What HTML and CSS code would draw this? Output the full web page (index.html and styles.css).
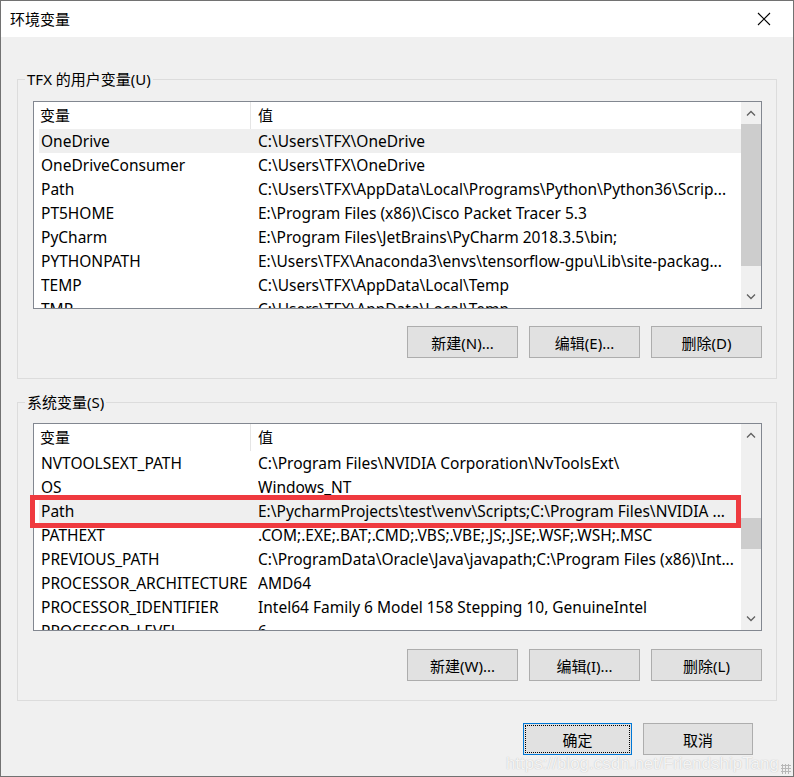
FILE: index.html
```html
<!DOCTYPE html>
<html>
<head>
  <meta charset="utf-8">
  <title>环境变量</title>
  <link rel="stylesheet" href="styles.css">
</head>
<body>
  <div class="dialog">
    <div class="titlebar">
      <span class="title">环境变量</span>
      <span class="close">
        <svg width="14" height="14" viewBox="0 0 14 14"><path d="M1 1 L13 13 M13 1 L1 13" stroke="#000" stroke-width="1.1" fill="none"/></svg>
      </span>
    </div>

    <div class="content">
      <fieldset class="group">
        <legend>TFX 的用户变量(U)</legend>
        <div class="list">
          <div class="list-body">
            <div class="list-head">
              <div class="head-col first">变量</div>
              <div class="head-col">值</div>
            </div>
            <div class="row hover"><span>OneDrive</span><span>C:\Users\TFX\OneDrive</span></div>
            <div class="row"><span>OneDriveConsumer</span><span>C:\Users\TFX\OneDrive</span></div>
            <div class="row"><span>Path</span><span>C:\Users\TFX\AppData\Local\Programs\Python\Python36\Scrip...</span></div>
            <div class="row"><span>PT5HOME</span><span>E:\Program Files (x86)\Cisco Packet Tracer 5.3</span></div>
            <div class="row"><span>PyCharm</span><span>E:\Program Files\JetBrains\PyCharm 2018.3.5\bin;</span></div>
            <div class="row"><span>PYTHONPATH</span><span>E:\Users\TFX\Anaconda3\envs\tensorflow-gpu\Lib\site-packag...</span></div>
            <div class="row"><span>TEMP</span><span>C:\Users\TFX\AppData\Local\Temp</span></div>
            <div class="row"><span>TMP</span><span>C:\Users\TFX\AppData\Local\Temp</span></div>
          </div>
          <div class="scrollbar">
            <div class="arrow up"><svg width="10" height="6" viewBox="0 0 10 6"><path d="M1 5.5 L5 1.5 L9 5.5" stroke="#606060" stroke-width="1.3" fill="none"/></svg></div>
            <div class="track"><div class="thumb thumb-user"></div></div>
            <div class="arrow down"><svg width="10" height="6" viewBox="0 0 10 6"><path d="M1 0.5 L5 4.5 L9 0.5" stroke="#606060" stroke-width="1.3" fill="none"/></svg></div>
          </div>
        </div>
        <div class="buttons">
          <button>新建(N)...</button>
          <button>编辑(E)...</button>
          <button>删除(D)</button>
        </div>
      </fieldset>

      <fieldset class="group second">
        <legend>系统变量(S)</legend>
        <div class="list">
          <div class="list-body">
            <div class="list-head">
              <div class="head-col first">变量</div>
              <div class="head-col">值</div>
            </div>
            <div class="row"><span>NVTOOLSEXT_PATH</span><span>C:\Program Files\NVIDIA Corporation\NvToolsExt\</span></div>
            <div class="row"><span>OS</span><span>Windows_NT</span></div>
            <div class="row hover"><span>Path</span><span>E:\PycharmProjects\test\venv\Scripts;C:\Program Files\NVIDIA ...</span></div>
            <div class="row"><span>PATHEXT</span><span>.COM;.EXE;.BAT;.CMD;.VBS;.VBE;.JS;.JSE;.WSF;.WSH;.MSC</span></div>
            <div class="row"><span>PREVIOUS_PATH</span><span>C:\ProgramData\Oracle\Java\javapath;C:\Program Files (x86)\Int...</span></div>
            <div class="row"><span>PROCESSOR_ARCHITECTURE</span><span>AMD64</span></div>
            <div class="row"><span>PROCESSOR_IDENTIFIER</span><span>Intel64 Family 6 Model 158 Stepping 10, GenuineIntel</span></div>
            <div class="row"><span>PROCESSOR_LEVEL</span><span>6</span></div>
          </div>
          <div class="scrollbar">
            <div class="arrow up"><svg width="10" height="6" viewBox="0 0 10 6"><path d="M1 5.5 L5 1.5 L9 5.5" stroke="#606060" stroke-width="1.3" fill="none"/></svg></div>
            <div class="track"><div class="thumb thumb-system"></div></div>
            <div class="arrow down"><svg width="10" height="6" viewBox="0 0 10 6"><path d="M1 0.5 L5 4.5 L9 0.5" stroke="#606060" stroke-width="1.3" fill="none"/></svg></div>
          </div>
          <div class="marker"></div>
        </div>
        <div class="buttons">
          <button>新建(W)...</button>
          <button>编辑(I)...</button>
          <button>删除(L)</button>
        </div>
      </fieldset>

      <div class="footer">
        <button class="default"><span class="focus">确定</span></button>
        <button>取消</button>
      </div>
    </div>

    <div class="watermark">https://blog.csdn.net/FriendshipTang</div>
    <div class="grip"></div>
  </div>
</body>
</html>
```

FILE: styles.css
```css
body {
  margin: 0;
  font-family: "Noto Sans", "Noto Sans CJK SC", sans-serif;
  font-size: 15px;
  color: #000;
}

.dialog {
  position: relative;
  width: 794px;
  height: 777px;
  box-sizing: border-box;
  border: 1px solid #727272;
  background-color: #f0f0f0;
  overflow: hidden;
}

.titlebar {
  height: 36px;
  background-color: #fff;
  display: flex;
  align-items: center;
  justify-content: space-between;
  padding-left: 9px;
}

.title {
  font-size: 15px;
  margin-top: -2px;
}

.close {
  width: 46px;
  display: flex;
  justify-content: center;
  margin-right: 6px;
  margin-top: -1px;
}

.content {
  padding: 0 39px 0 16px;
}

.group {
  margin: 32px -23px 0 0;
  padding: 12px 14px 20px 15px;
  border: 1px solid #dcdcdc;
  min-width: 0;
}

.group.second {
  margin-top: 13px;
  padding-top: 11px;
  padding-bottom: 19px;
}

.group legend {
  padding: 0 2px;
  margin-left: -8px;
  line-height: 20px;
  font-size: 15px;
}

.list {
  position: relative;
  display: flex;
  height: 206px;
  border: 1px solid #828790;
  background-color: #fff;
}

.list-body {
  flex: 1;
  min-width: 0;
  overflow: hidden;
}

.list-head {
  display: grid;
  grid-template-columns: 217px 1fr;
  height: 27px;
  align-items: center;
}

.head-col {
  padding-left: 7px;
  height: 27px;
  line-height: 27px;
}

.head-col.first {
  border-right: 1px solid #e5e5e5;
  padding-left: 6px;
}

.row {
  display: grid;
  grid-template-columns: 217px 1fr;
  height: 24px;
  line-height: 24px;
  margin-left: 5px;
  padding-left: 2px;
  font-size: 15.5px;
  white-space: nowrap;
}

.row span {
  overflow: hidden;
}

.row.hover {
  background-color: #efefef;
}

/* red highlight drawn over the Path row */
.marker {
  position: absolute;
  left: -4px;
  right: 20px;
  top: 71px;
  height: 33px;
  box-sizing: border-box;
  border: 5px solid #ef3a3f;
}

.scrollbar {
  width: 20px;
  background-color: #f0f0f0;
  display: flex;
  flex-direction: column;
}

.arrow {
  height: 22px;
  display: flex;
  align-items: center;
  justify-content: center;
}

.track {
  flex: 1;
}

.thumb {
  background-color: #cdcdcd;
}

.thumb-user {
  height: 142px;
}

.thumb-system {
  height: 31px;
  margin-top: 72px;
}

.buttons {
  display: flex;
  justify-content: flex-end;
  gap: 11px;
  margin-top: 17px;
}

.second .buttons {
  margin-top: 18px;
}

button {
  font-family: "Noto Sans", "Noto Sans CJK SC", sans-serif;
  font-size: 15px;
  color: #000;
  width: 111px;
  height: 32px;
  background-color: #e1e1e1;
  border: 1px solid #adadad;
  padding: 0;
}

.footer {
  display: flex;
  justify-content: flex-end;
  gap: 11px;
  margin-top: 22px;
  margin-right: 1px;
}

.footer button {
  width: 110px;
}

.footer button.default {
  width: 109px;
  border: 1px solid #0078d7;
  padding: 1px;
}

.focus {
  display: flex;
  align-items: center;
  justify-content: center;
  height: 100%;
  box-sizing: border-box;
  border: 1px dotted #000;
}

.watermark {
  position: absolute;
  right: 14px;
  bottom: 2px;
  font-family: "Liberation Sans", Arial, sans-serif;
  font-size: 17px;
  color: rgba(255, 255, 255, 0.85);
  text-shadow: 0 0 1px rgba(120, 120, 120, 0.5);
}

.grip {
  position: absolute;
  right: 2px;
  bottom: 2px;
  width: 10px;
  height: 10px;
  background-image: radial-gradient(#b8b8b8 1px, transparent 1.2px);
  background-size: 3px 3px;
}
```
